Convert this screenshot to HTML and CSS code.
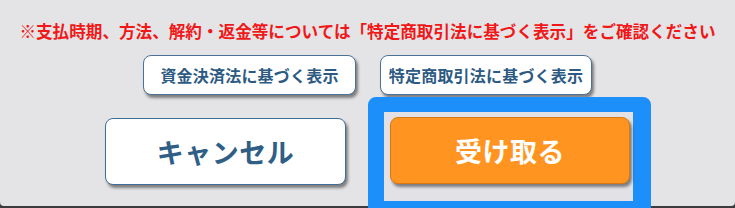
FILE: index.html
```html
<!DOCTYPE html>
<html lang="ja">
<head>
<meta charset="utf-8">
<link rel="stylesheet" href="styles.css">
</head>
<body>
<div class="panel">
  <p class="notice">※支払時期、方法、解約・返金等については「特定商取引法に基づく表示」をご確認ください</p>
  <div class="links">
    <button class="link-btn link-a">資金決済法に基づく表示</button>
    <button class="link-btn link-b">特定商取引法に基づく表示</button>
  </div>
  <div class="actions">
    <button class="cancel-btn">キャンセル</button>
    <div class="focus-frame">
      <button class="accept-btn">受け取る</button>
    </div>
  </div>
</div>
</body>
</html>
```
FILE: styles.css
```css
* { box-sizing: border-box; }
html, body {
  margin: 0;
  padding: 0;
  width: 735px;
  height: 208px;
  overflow: hidden;
  background: #3c3c3c;
}
body {
  font-family: "Noto Sans CJK JP", "Noto Sans", sans-serif;
}
.panel {
  height: 206px;
  background: #e4e4e6;
  border-radius: 0 0 4px 4px;
  display: flex;
  flex-direction: column;
  align-items: center;
  padding-top: 22px;
}
.notice {
  margin: 0;
  font-size: 16.6px;
  line-height: 18px;
  font-weight: 700;
  color: #f01818;
  white-space: nowrap;
}
.links {
  margin-top: 15px;
  display: flex;
  gap: 24px;
}
.link-btn {
  height: 40px;
  padding: 0;
  background: #ffffff;
  border: 1px solid #4a7299;
  border-radius: 8px;
  box-shadow: 2px 3px 3px rgba(0, 0, 0, 0.45);
  font-family: inherit;
  font-size: 16px;
  font-weight: 700;
  color: #2d5a82;
  letter-spacing: 0.2px;
}
.link-a { width: 213px; }
.link-b { width: 212px; }
.actions {
  margin-top: 2px;
  display: flex;
  align-items: flex-start;
  gap: 22px;
  margin-left: 21px;
}
.cancel-btn {
  margin-top: 21px;
  width: 241px;
  height: 67px;
  padding: 0;
  background: #ffffff;
  border: 1px solid #3f6d96;
  border-radius: 8px;
  box-shadow: 2px 3px 3px rgba(0, 0, 0, 0.45);
  font-family: inherit;
  font-size: 27px;
  font-weight: 700;
  color: #2f5e87;
  letter-spacing: 0.5px;
}
.focus-frame {
  width: 283px;
  height: 120px;
  border: 16px solid #1c8ffb;
  border-top-width: 15px;
  border-right-width: 18px;
  border-radius: 8px;
  background: #e2e2e6;
  padding: 5px 0 0 6px;
}
.accept-btn {
  display: block;
  width: 240px;
  height: 67px;
  padding: 0;
  background: #ff9421;
  border: 1px solid #d97810;
  border-radius: 8px;
  box-shadow: 2px 3px 3px rgba(0, 0, 0, 0.45);
  font-family: inherit;
  font-size: 27px;
  font-weight: 700;
  color: #ffffff;
  letter-spacing: 0.5px;
}
```
